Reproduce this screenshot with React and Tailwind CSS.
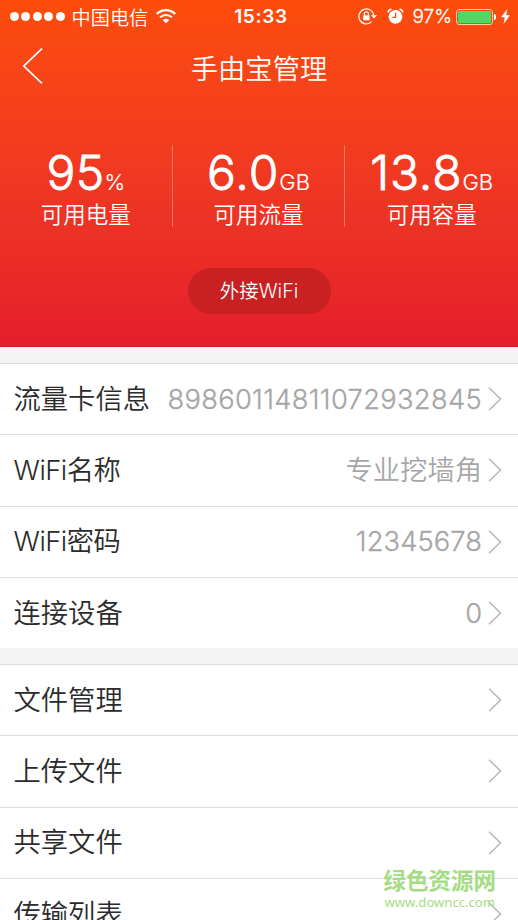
const stats = [
    { value: '95', unit: '%', label: '可用电量', numClass: 'tracking-[0.3px]' },
    { value: '6.0', unit: 'GB', label: '可用流量', numClass: 'tracking-[1px]' },
    { value: '13.8', unit: 'GB', label: '可用容量', numClass: 'tracking-[0.9px]' },
]

const infoRows = [
    { label: '流量卡信息', value: '89860114811072932845', valueClass: 'tracking-[0.33px] [-webkit-text-stroke:0.3px_#a6a6a6]' },
    { label: 'WiFi名称', value: '专业挖墙角', labelClass: 'tracking-[-0.5px]' },
    { label: 'WiFi密码', value: '12345678', labelClass: 'tracking-[-0.5px]', valueClass: 'tracking-[0.1px] [-webkit-text-stroke:0.3px_#a6a6a6]' },
    { label: '连接设备', value: '0', valueClass: '[-webkit-text-stroke:0.3px_#a6a6a6]' },
]

const fileRows = [
    { label: '文件管理' },
    { label: '上传文件' },
    { label: '共享文件' },
    { label: '传输列表' },
]

const StatusBar = () => {
    return (
        <div className="grid grid-cols-[1fr_auto_1fr] items-center h-8 pt-px pl-[10px] pr-[8px]">
            <div className="flex items-center">
                <div className="flex gap-[2.4px]">
                    {[1, 2, 3, 4, 5].map((n) => (
                        <span key={n} className="size-[9px] rounded-full bg-white"></span>
                    ))}
                </div>
                <span className="ml-[7px] pt-[2px] text-[19.2px] leading-7 whitespace-nowrap">中国电信</span>
                <svg className="ml-[8px] w-5 h-[15px] shrink-0" viewBox="0 0 20 15" fill="none" stroke="white" strokeWidth="2.1">
                    <path d="M0.8 5C6 -0.2 14 -0.2 19.2 5" />
                    <path d="M4.1 8.3C7.5 5.2 12.5 5.2 15.9 8.3" />
                    <path d="M6.8 11C8.7 9.4 11.3 9.4 13.2 11L10 14.2Z" fill="white" stroke="none" />
                </svg>
            </div>
            <span className="pt-px pl-[2px] text-[19px] font-semibold tracking-[0.7px] leading-7">15:33</span>
            <div className="flex items-center justify-end">
                <svg className="w-[19px] h-[17px]" viewBox="0 0 19 17" fill="none" stroke="white" strokeWidth="1.2">
                    <path d="M15.9 8.2A7.5 7.5 0 1 0 13.8 13.7" />
                    <path d="M13 7.2H19L16 10.6Z" fill="white" stroke="none" />
                    <rect x="5.2" y="7.3" width="6.4" height="5" fill="white" stroke="none" />
                    <path d="M6.4 7.5V5.8A2 2 0 0 1 10.4 5.8V7.5" />
                </svg>
                <svg className="ml-[10px] w-[17px] h-[17px]" viewBox="0 0 17 17">
                    <circle cx="8.5" cy="8.8" r="6.9" fill="white" />
                    <path d="M1 4.5A4 4 0 0 1 4.6 1.3M16 4.5A4 4 0 0 0 12.4 1.3" fill="none" stroke="white" strokeWidth="1.5" />
                    <path d="M8.6 4.8V9.3H5.4" fill="none" stroke="#fa4a0c" strokeWidth="1.3" />
                </svg>
                <span className="ml-[9px] pt-px text-[19px] leading-7 [-webkit-text-stroke:0.3px_white]">97%</span>
                <div className="ml-[4px] w-[37px] h-4 rounded-[3px] border border-[#ffd0a8] p-px shrink-0">
                    <div className="h-full rounded-[1px] bg-[#4cd964]"></div>
                </div>
                <div className="w-[2px] h-[6px] ml-px rounded-r-full bg-white"></div>
                <svg className="ml-[5px] w-[9px] h-[15px] shrink-0" viewBox="0 0 9 15" fill="white">
                    <path d="M6.3 0L0 8.3H3.8L2.6 15L9 6.2H5.2Z" />
                </svg>
            </div>
        </div>
    )
}

const Row = ({ label, value, labelClass = '', valueClass = '' }) => {
    return (
        <div className="flex items-center justify-between h-[71.25px] border-t border-[#dedede] pl-[13.5px] pr-4 text-[27.3px] leading-none whitespace-nowrap">
            <span className={`pt-px text-[#2b2b2b] ${labelClass}`}>{label}</span>
            <div className="flex items-center gap-[6px] text-[#a6a6a6]">
                <span className={`pt-px ${valueClass}`}>{value}</span>
                <svg className="w-[14px] h-6 shrink-0" viewBox="0 0 14 24" fill="none" stroke="#b4b4b4" strokeWidth="1.4">
                    <path d="M1 0.8L12.6 12L1 23.2" />
                </svg>
            </div>
        </div>
    )
}

const App = () => {
    return (
        <div className="relative w-full h-[920px] overflow-hidden bg-[#f3f3f3] font-[350] font-['Inter','Noto_Sans_CJK_SC',sans-serif]">
            <header className="h-[347px] bg-linear-to-b from-[#fc4d0a] to-[#e41e2c] border-b border-[#c9202b] text-white">
                <StatusBar />
                <div className="grid grid-cols-[1fr_auto_1fr] items-center h-[72px] px-[22px]">
                    <svg className="w-[21px] h-9 -mt-1" viewBox="0 0 21 36" fill="none" stroke="white" strokeWidth="1.7">
                        <path d="M20 0.6L1.8 18L20 35.4" />
                    </svg>
                    <h1 className="pt-[3px] text-[27.3px] leading-none">手由宝管理</h1>
                </div>
                <div className="grid grid-cols-3 grid-rows-[82px] mt-[41px] h-[82px] divide-x divide-white/30">
                    {stats.map((item) => (
                        <div key={item.label} className="flex flex-col items-center whitespace-nowrap">
                            <div className="flex items-baseline h-[56px] leading-[56px]">
                                <span className={`text-[48px] [-webkit-text-stroke:0.9px_white] ${item.numClass}`}>{item.value}</span>
                                <span className="text-[22px] [-webkit-text-stroke:0.2px_white]">{item.unit}</span>
                            </div>
                            <span className="text-[22.5px] leading-[27px]">{item.label}</span>
                        </div>
                    ))}
                </div>
                <button className="block mx-auto mt-[41px] w-[143px] h-[46px] pt-[2px] rounded-full bg-[#c92022] text-[19.5px] leading-none">
                    外接WiFi
                </button>
            </header>
            <section className="mt-4 bg-white">
                {infoRows.map((row) => <Row key={row.label} {...row} />)}
            </section>
            <section className="mt-4 bg-white">
                {fileRows.map((row) => <Row key={row.label} {...row} />)}
            </section>
            <div className="absolute right-[22px] bottom-[10px] flex flex-col items-center text-[#a5dc84]">
                <span className="text-[22.5px] leading-[26px] font-bold">绿色资源网</span>
                <span className="text-[13.1px] leading-4 font-normal font-['Noto_Sans',sans-serif]">www.downcc.com</span>
            </div>
        </div>
    )
}

export default App
